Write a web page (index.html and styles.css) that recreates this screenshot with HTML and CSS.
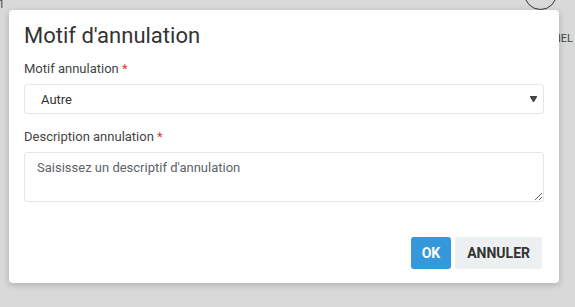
FILE: index.html
```html
<!DOCTYPE html>
<html lang="fr">
<head>
<meta charset="utf-8">
<title>Motif d'annulation</title>
<link rel="stylesheet" href="styles.css">
</head>
<body>
<div class="page">
  <span class="bg-num">1</span>
  <span class="bg-circle"></span>
  <span class="bg-tick"></span>
  <span class="bg-label">PERSONNEL</span>
</div>
<div class="dialog">
  <h2 class="title">Motif d'annulation</h2>
  <div class="field">
    <label class="label">Motif annulation <span class="req">*</span></label>
    <div class="select">
      <span class="select-value">Autre</span>
      <svg class="caret" width="7" height="6" viewBox="0 0 7 6"><polygon points="0,0 7,0 7,1 4,6 3,6 0,1" fill="#444"/></svg>
    </div>
  </div>
  <div class="field">
    <label class="label">Description annulation <span class="req">*</span></label>
    <textarea class="textarea" placeholder="Saisissez un descriptif d'annulation"></textarea>
  </div>
  <div class="actions">
    <button class="btn btn-primary">OK</button>
    <button class="btn btn-default">ANNULER</button>
  </div>
</div>
</body>
</html>
```

FILE: styles.css
```css
html, body {
  margin: 0;
  padding: 0;
}
body {
  width: 575px;
  height: 307px;
  overflow: hidden;
  background: #d9d9d9;
  font-family: Roboto, "Liberation Sans", sans-serif;
  position: relative;
}
.page {
  position: absolute;
  inset: 0;
}
.bg-num {
  position: absolute;
  left: -2px;
  top: -3px;
  font-size: 12px;
  color: #555;
}
.bg-circle {
  position: absolute;
  left: 524px;
  top: -23px;
  width: 31px;
  height: 31px;
  border: 1.5px solid #333;
  border-radius: 50%;
}
.bg-tick {
  position: absolute;
  left: 558px;
  top: 18px;
  width: 1px;
  height: 10px;
  background: #aaa;
}
.bg-label {
  position: absolute;
  right: 2px;
  top: 32px;
  font-size: 11px;
  color: #444;
  white-space: nowrap;
}
.dialog {
  position: absolute;
  left: 9px;
  top: 10px;
  width: 550px;
  height: 273px;
  box-sizing: border-box;
  background: #fff;
  border-radius: 4px;
  box-shadow: 0 2px 7px rgba(0,0,0,0.2);
  padding: 13px 15px 14px 15px;
  display: flex;
  flex-direction: column;
}
.title {
  margin: 0 0 12px 0;
  font-size: 22px;
  line-height: 26px;
  font-weight: 400;
  color: #333;
}
.field {
  display: flex;
  flex-direction: column;
  margin-bottom: 15px;
}
.label {
  font-size: 13px;
  line-height: 16px;
  color: #444;
  margin-bottom: 7px;
}
.req {
  color: #e53935;
}
.select {
  height: 30px;
  box-sizing: border-box;
  border: 1px solid #e6e6e6;
  border-radius: 3px;
  display: flex;
  align-items: center;
  justify-content: space-between;
  padding: 0 6px 0 16px;
  font-size: 13px;
  color: #333;
}
.caret {
  display: block;
}
.textarea {
  height: 50px;
  box-sizing: border-box;
  border: 1px solid #e6e6e6;
  border-radius: 3px;
  padding: 7px 12px;
  font-family: Roboto, "Liberation Sans", sans-serif;
  font-size: 13px;
  line-height: 16px;
  color: #333;
  resize: vertical;
  outline: none;
  margin: 0;
}
.textarea::placeholder {
  color: #5d636b;
  opacity: 1;
}
.actions {
  margin-top: auto;
  display: flex;
  justify-content: flex-end;
  gap: 4px;
  padding-right: 2px;
}
.btn {
  height: 32px;
  border: none;
  border-radius: 3px;
  font-family: Roboto, "Liberation Sans", sans-serif;
  font-size: 14px;
  font-weight: 700;
  padding: 0 12px;
  cursor: pointer;
}
.btn-primary {
  background: #3498db;
  color: #fff;
  padding: 0 11px;
}
.btn-default {
  background: #ecf0f1;
  color: #333;
}
```
